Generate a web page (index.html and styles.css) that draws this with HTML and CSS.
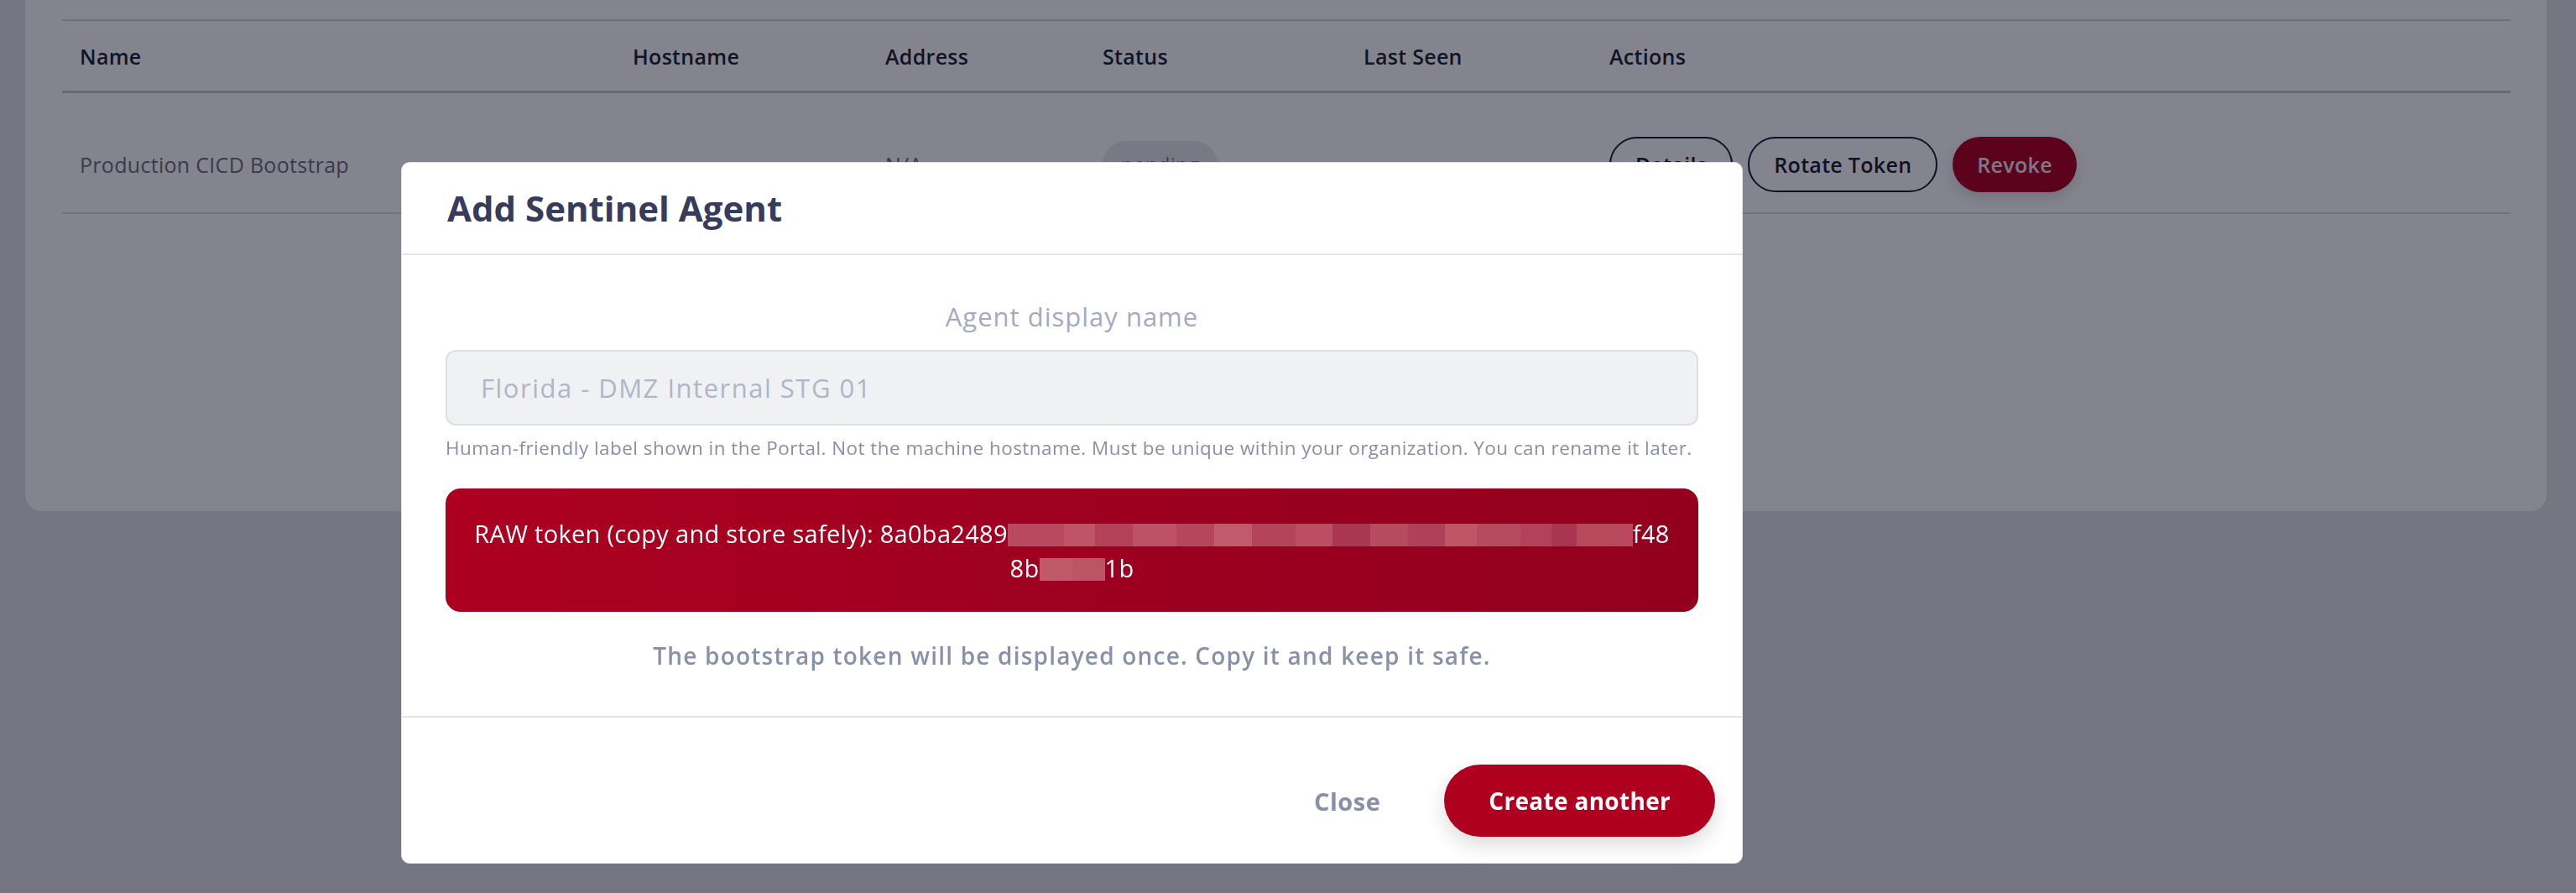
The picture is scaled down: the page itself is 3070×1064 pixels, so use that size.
FILE: index.html
```html
<!DOCTYPE html>
<html lang="en">
<head>
    <meta charset="UTF-8">
    <title>Sentinel Agents</title>
    <link rel="stylesheet" href="styles.css">
</head>
<body>
    <div class="page">
        <div class="card">
            <div class="agents-table">
                <div class="row head">
                    <div class="cell">Name</div>
                    <div class="cell">Hostname</div>
                    <div class="cell">Address</div>
                    <div class="cell">Status</div>
                    <div class="cell">Last Seen</div>
                    <div class="cell">Actions</div>
                </div>
                <div class="row">
                    <div class="cell muted">Production CICD Bootstrap</div>
                    <div class="cell"></div>
                    <div class="cell muted">N/A</div>
                    <div class="cell"><span class="badge">pending</span></div>
                    <div class="cell"></div>
                    <div class="cell actions">
                        <button class="btn-outline">Details</button>
                        <button class="btn-outline">Rotate Token</button>
                        <button class="btn-danger">Revoke</button>
                    </div>
                </div>
            </div>
        </div>
    </div>

    <div class="backdrop">
        <div class="modal">
            <div class="modal-header">
                <h2>Add Sentinel Agent</h2>
            </div>
            <div class="modal-body">
                <label class="field-label" for="agent-name">Agent display name</label>
                <input id="agent-name" class="input-field" placeholder="Florida - DMZ Internal STG 01">
                <p class="help">Human-friendly label shown in the Portal. Not the machine hostname. Must be unique within your organization. You can rename it later.</p>

                <div class="token-box">
                    <div class="token-line">RAW token (copy and store safely): 8a0ba2489<span class="blur blur-long"></span>f48</div>
                    <div class="token-line">8b<span class="blur blur-short"></span>1b</div>
                </div>

                <p class="note">The bootstrap token will be displayed once. Copy it and keep it safe.</p>
            </div>
            <div class="modal-footer">
                <button class="btn-link">Close</button>
                <button class="btn-primary">Create another</button>
            </div>
        </div>
    </div>
</body>
</html>
```

FILE: styles.css
```css
:root {
    --red: #b00020;
    --heading: #373b5c;
    --muted: #8a8ea8;
    --line: #e1e5ec;
}

* {
    box-sizing: border-box;
}

body {
    margin: 0;
    font-family: 'Open Sans', 'Noto Sans', Arial, sans-serif;
    background: #e4e4e8;
    height: 1064px;
    overflow: hidden;
}

.page {
    padding: 0 35px 0 30px;
}

.card {
    background: #fff;
    border-radius: 0 0 20px 20px;
    padding: 23px 43px 0 44px;
    height: 609px;
}

/* agents table */
.agents-table {
    border-top: 2px solid #d6d8dc;
}

.row {
    display: grid;
    grid-template-columns: 659px 301px 259px 311px 293px 1fr;
    align-items: center;
    height: 144px;
    padding-top: 28px;
    border-bottom: 2px solid #dadcdf;
    font-size: 25px;
    letter-spacing: 0.3px;
}

.row.head {
    height: 86px;
    padding-top: 0;
    border-bottom: 3px solid #c8cad0;
    font-weight: 600;
    color: #1d2733;
}

.cell {
    padding-left: 21px;
}

.muted {
    color: #6c727c;
}

.badge {
    display: inline-block;
    background: #e8eaee;
    color: #7a808a;
    border-radius: 30px;
    padding: 12px 22px;
    font-size: 24px;
    line-height: 32px;
}

.actions {
    display: flex;
    gap: 18px;
}

.btn-outline,
.btn-danger {
    font-family: inherit;
    font-size: 25px;
    font-weight: 600;
    letter-spacing: 0.3px;
    height: 66px;
    border-radius: 33px;
    padding: 0 29px;
}

.btn-outline {
    background: transparent;
    border: 2px solid #172033;
    color: #172033;
}

.btn-danger {
    background: var(--red);
    border: none;
    color: #f4e6ea;
    padding: 0 29px;
    box-shadow: 0 6px 16px rgba(0,0,0,0.15);
}

/* modal */
.backdrop {
    position: fixed;
    inset: 0;
    background: rgba(4,4,24,0.49);
    padding: 193px 0 0 478px;
}

.modal {
    width: 1599px;
    background: #fff;
    border: 1px solid #dfe3ea;
    border-radius: 10px;
}

.modal-header {
    padding: 28px 54px;
    border-bottom: 2px solid var(--line);
}

.modal-header h2 {
    margin: 0;
    font-size: 42px;
    line-height: 52px;
    font-weight: 700;
    color: var(--heading);
}

.modal-body {
    padding: 51px 52px 51px;
    display: flex;
    flex-direction: column;
}

.field-label {
    text-align: center;
    font-size: 31px;
    line-height: 45px;
    letter-spacing: 1px;
    color: #a6aabd;
}

.input-field {
    margin-top: 17px;
    height: 90px;
    border: 2px solid #dcdfe5;
    border-radius: 12px;
    background: #f0f1f3;
    padding: 0 40px;
    font-family: inherit;
    font-size: 31px;
    letter-spacing: 1.5px;
    color: #444;
}

.input-field::placeholder {
    color: #b1b5c8;
}

.help {
    margin: 12px 0 0;
    font-size: 22.5px;
    line-height: 30px;
    letter-spacing: 0.45px;
    white-space: nowrap;
    color: var(--muted);
}

.token-box {
    margin-top: 33px;
    padding: 33px 10px 32px;
    border-radius: 18px;
    background: linear-gradient(95deg, #ad0020 0%, #9e001f 50%, #92001e 100%);
    color: #fff;
    font-size: 29px;
    line-height: 41px;
    letter-spacing: 0.3px;
    text-align: center;
}

.token-line {
    white-space: nowrap;
}

.blur {
    display: inline-block;
    vertical-align: middle;
    height: 27px;
    margin-top: -4px;
}

.blur-long {
    width: 745px;
    background: linear-gradient(90deg,
        #b9495e 0 9%, #bf5467 9% 14%, #b34258 14% 20%, #bd5165 20% 27%,
        #b5475c 27% 33%, #c25a6c 33% 39%, #b3445a 39% 46%, #bb4e62 46% 52%,
        #a93751 52% 58%, #b64a5e 58% 64%, #b0405a 64% 70%, #bf5668 70% 75%,
        #b64a5e 75% 82%, #b24159 82% 87%, #a93550 87% 91%, #b8495d 91% 100%);
}

.blur-short {
    width: 78px;
    background: linear-gradient(90deg, #c05a6b 0 50%, #bc5466 50% 100%);
}

.note {
    margin: 31px 0 0;
    text-align: center;
    font-size: 28px;
    line-height: 42px;
    letter-spacing: 1.2px;
    font-weight: 600;
    color: #8990ab;
}

.modal-footer {
    display: flex;
    justify-content: flex-end;
    align-items: center;
    gap: 46px;
    padding: 56px 32px 31px;
    border-top: 2px solid var(--line);
}

.btn-link {
    background: none;
    border: none;
    font-family: inherit;
    font-size: 29px;
    letter-spacing: 0.5px;
    font-weight: 700;
    color: var(--muted);
    padding: 0 30px;
}

.btn-primary {
    background: var(--red);
    border: none;
    color: #fff;
    font-family: inherit;
    font-size: 28px;
    font-weight: 700;
    letter-spacing: 0.3px;
    height: 86px;
    border-radius: 43px;
    padding: 0 53px;
    box-shadow: 0 10px 24px rgba(0,0,0,0.14);
}
```
